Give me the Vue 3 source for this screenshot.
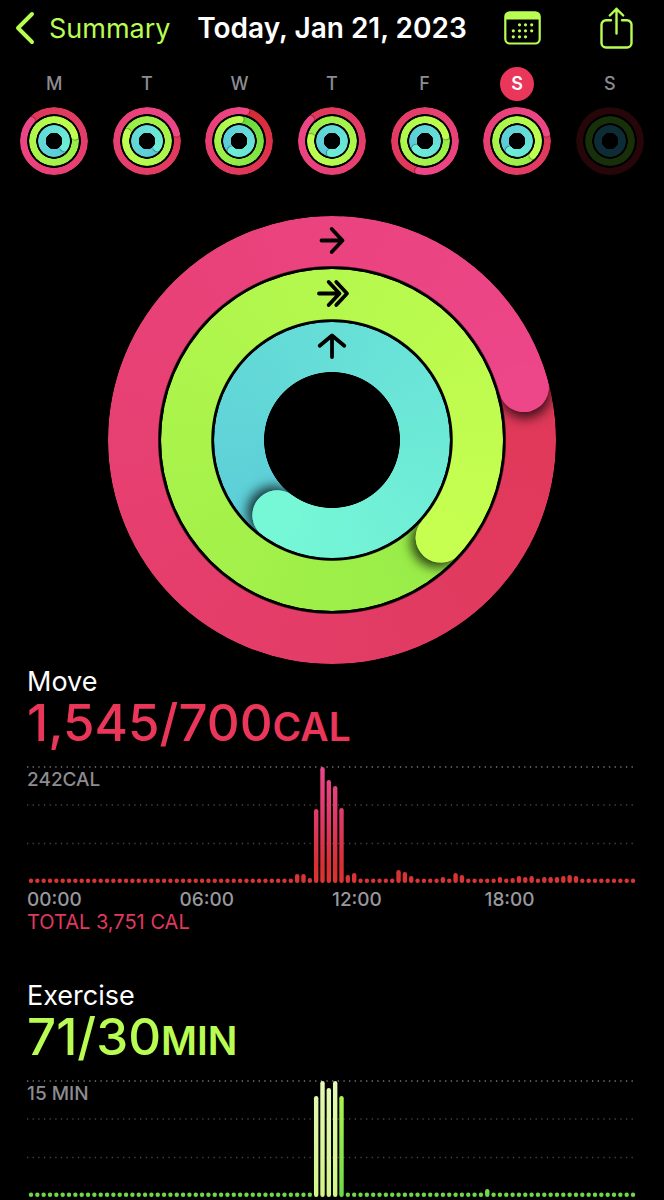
<script setup>
const palette = {
  move: ['#df3857', '#ed4689'],
  exercise: ['#98ec48', '#c6ff50'],
  stand: ['#5ccdd8', '#76f8d6'],
}
const smallPalette = {
  move: ['#df3857', '#ed4689'],
  exercise: ['#98ec48', '#c0ff50'],
  stand: ['#5ac8d8', '#6ceed6'],
}
const freshPalette = {
  move: ['#d62b35', '#ed4689'],
  exercise: ['#66d93c', '#bafc50'],
  stand: ['#5ac8d8', '#6ceed6'],
}
const kinds = ['move', 'exercise', 'stand']

function ringsFor(angles, colors = smallPalette) {
  return kinds.map((kind, i) => ({ kind, angle: angles[i], from: colors[kind][0], to: colors[kind][1] }))
}

function ringStyle(ring) {
  return { '--angle': ring.angle + 'deg', '--from': ring.from, '--to': ring.to }
}

const days = [
  { letter: 'M', name: 'Monday', rings: ringsFor([312, 77, 120]) },
  { letter: 'T', name: 'Tuesday', rings: ringsFor([75, 293, 120]) },
  { letter: 'W', name: 'Wednesday', rings: ringsFor([13, 3, 216], freshPalette) },
  { letter: 'T', name: 'Thursday', rings: ringsFor([315, 279, 184]) },
  { letter: 'F', name: 'Friday', rings: ringsFor([192, 76, 228]) },
  { letter: 'S', name: 'Saturday', selected: true, rings: ringsFor([75, 132, 216]) },
  { letter: 'S', name: 'Sunday', empty: true, rings: ringsFor([0, 0, 0]) },
]

const today = ringsFor([74.6, 132, 216], palette)

function quarterHours(values, base) {
  return Array.from({ length: 96 }, (_, i) => {
    const height = values[i] ?? base
    return { i, x: 4 + i * 6.337 - 2.2, y: 117 - height, height }
  })
}

const hours = ['00:00', '06:00', '12:00', '18:00']

const charts = [
  {
    id: 'move',
    title: 'Move',
    value: '1,545/700',
    unit: 'CAL',
    peak: '242CAL',
    total: 'TOTAL 3,751 CAL',
    bright: [],
    bars: quarterHours({
      42: 9, 43: 9, 44: 5, 45: 74, 46: 116, 47: 103, 48: 97, 49: 75, 50: 8, 51: 10,
      58: 13, 59: 11, 60: 7, 65: 6, 67: 10, 68: 8, 74: 6, 76: 5, 77: 7, 78: 6, 79: 7,
      81: 6, 82: 6, 83: 6, 84: 7, 85: 8, 86: 7,
    }, 4.4),
  },
  {
    id: 'exercise',
    title: 'Exercise',
    value: '71/30',
    unit: 'MIN',
    peak: '15 MIN',
    bright: [45, 46, 47, 48],
    bars: quarterHours({ 45: 101, 46: 116, 47: 109, 48: 116, 49: 101, 72: 8 }, 4.4),
  },
]
</script>

<template>
  <main class="page">
    <header class="bar">
      <button type="button" class="back">
        <svg width="20" height="34" viewBox="0 0 20 34" aria-hidden="true">
          <path d="M17 3 3 17 17 31" fill="none" stroke="currentColor" stroke-width="4" stroke-linecap="round" stroke-linejoin="round" />
        </svg>
        <span>Summary</span>
      </button>
      <h1 class="date">Today, Jan 21, 2023</h1>
      <div class="actions">
        <button type="button" class="icon" aria-label="Calendar">
          <svg width="37" height="34" viewBox="0 0 37 34" aria-hidden="true">
            <rect x="1.3" y="1.3" width="34.4" height="31.2" rx="4.5" fill="none" stroke="currentColor" stroke-width="2.2" />
            <path d="M1 8.5V5.5A4.5 4.5 0 0 1 5.500 1H31.500A4.500 4.500 0 0 1 36 5.500V8.500Z" fill="currentColor" />
            <g fill="currentColor">
              <circle cx="15.500" cy="13.800" r="1.600" /><circle cx="21.500" cy="13.800" r="1.600" /><circle cx="27.700" cy="13.800" r="1.600" />
              <circle cx="9.300" cy="19.800" r="1.600" /><circle cx="15.500" cy="19.800" r="1.600" /><circle cx="21.500" cy="19.800" r="1.600" /><circle cx="27.700" cy="19.800" r="1.600" />
              <circle cx="9.300" cy="25.800" r="1.600" /><circle cx="15.500" cy="25.800" r="1.600" /><circle cx="21.500" cy="25.800" r="1.600" />
            </g>
          </svg>
        </button>
        <button type="button" class="icon" aria-label="Share">
          <svg width="33" height="42" viewBox="0 0 33 42" aria-hidden="true">
            <g fill="none" stroke="currentColor" stroke-width="2.400" stroke-linecap="round" stroke-linejoin="round">
              <path d="M11 13.300H6A4.500 4.500 0 0 0 1.500 17.800V36A4.500 4.500 0 0 0 6 40.500H27A4.500 4.500 0 0 0 31.500 36V17.800A4.500 4.500 0 0 0 27 13.300H22" />
              <path d="M16.500 26.500V1.800M9.800 8.500 16.500 1.800 23.200 8.500" />
            </g>
          </svg>
        </button>
      </div>
    </header>

    <nav class="week" aria-label="Days of the week">
      <button v-for="day in days" :key="day.name" type="button" class="day" :class="{ selected: day.selected, empty: day.empty }" :aria-label="day.name">
        <span class="letter">{{ day.letter }}</span>
        <span class="rings small">
          <span v-for="ring in day.rings" :key="ring.kind" class="ring" :class="ring.kind" :style="ringStyle(ring)">
            <span class="turn"><span class="shade"></span></span>
            <span class="tail"></span>
            <span class="turn"><span class="cap"></span></span>
          </span>
        </span>
      </button>
    </nav>

    <div class="rings large" role="img" aria-label="Move, Exercise and Stand rings">
      <span v-for="ring in today" :key="ring.kind" class="ring" :class="ring.kind" :style="ringStyle(ring)">
        <span class="turn"><span class="shade"></span></span>
        <span class="tail"></span>
        <span class="turn"><span class="cap"></span></span>
      </span>
      <svg class="arrows" viewBox="0 0 448 448" aria-hidden="true">
        <g fill="none" stroke="#000" stroke-width="3.800" stroke-linecap="round" stroke-linejoin="round">
          <path d="M213.500 24.500H234.500M223.700 13 234.500 24.500 223.700 36" />
          <path d="M211 77.500H231.500M220.700 66 231.500 77.500 220.700 89M228.300 66 239 77.500 228.300 89" />
          <path d="M224 141V120M211.700 129.800 224 119.500 236.300 129.800" />
        </g>
      </svg>
    </div>

    <section v-for="chart in charts" :key="chart.id" class="metric" :class="chart.id">
      <h2 class="title">{{ chart.title }}</h2>
      <p class="value">{{ chart.value }}<span class="unit">{{ chart.unit }}</span></p>
      <div class="chart">
        <svg class="plot" viewBox="0 0 610 117" role="img" :aria-label="chart.title + ' by time of day'">
          <defs>
            <linearGradient id="move-fill" gradientUnits="userSpaceOnUse" x1="0" y1="0" x2="0" y2="117">
              <stop offset="0" stop-color="#ec4790" />
              <stop offset="0.500" stop-color="#dd385f" />
              <stop offset="0.850" stop-color="#d72f33" />
              <stop offset="1" stop-color="#d93632" />
            </linearGradient>
            <linearGradient id="exercise-fill" gradientUnits="userSpaceOnUse" x1="0" y1="0" x2="0" y2="117">
              <stop offset="0" stop-color="#b8f94e" />
              <stop offset="1" stop-color="#6cd748" />
            </linearGradient>
            <linearGradient id="bright-fill" gradientUnits="userSpaceOnUse" x1="0" y1="0" x2="0" y2="117">
              <stop offset="0" stop-color="#e5f9b5" />
              <stop offset="1" stop-color="#d2f588" />
            </linearGradient>
          </defs>
          <g class="grid" stroke-dasharray="1.300 4.350">
            <line x1="0" x2="610" y1="1" y2="1" class="strong" />
            <line x1="0" x2="610" y1="39" y2="39" />
            <line x1="0" x2="610" y1="77.500" y2="77.500" />
          </g>
          <rect
            v-for="bar in chart.bars"
            :key="bar.i"
            :x="bar.x"
            :y="bar.y"
            width="4.400"
            :height="bar.height"
            rx="2.200"
            :fill="chart.bright.includes(bar.i) ? 'url(#bright-fill)' : `url(#${chart.id}-fill)`"
          />
        </svg>
        <span class="peak">{{ chart.peak }}</span>
      </div>
      <template v-if="chart.total">
        <div class="hours">
          <span v-for="hour in hours" :key="hour">{{ hour }}</span>
        </div>
        <p class="total">{{ chart.total }}</p>
      </template>
    </section>
  </main>
</template>

<style>
body {
  background: #000;
}
</style>

<style scoped>
.page {
  min-height: 100vh;
  box-sizing: border-box;
  background: #000;
  color: #fff;
  font-family: Inter, "Liberation Sans", sans-serif;
}

button {
  padding: 0;
  border: 0;
  background: none;
  color: inherit;
  font: inherit;
  cursor: pointer;
}

h1,
h2,
p {
  margin: 0;
}

.bar {
  display: grid;
  grid-template-columns: 1fr auto 1fr;
  align-items: center;
  height: 56px;
  padding: 0 15px;
  color: #b9fc52;
}

.back {
  display: flex;
  align-items: center;
  gap: 14px;
  font-size: 27px;
}

.date {
  color: #fff;
  font-size: 28px;
  font-weight: 600;
  white-space: nowrap;
}

.actions {
  display: flex;
  justify-content: flex-end;
  align-items: center;
  gap: 59px;
  padding-right: 16px;
}

.icon {
  display: flex;
}

.week {
  display: grid;
  grid-template-columns: repeat(7, 1fr);
  padding: 11px 8px 0;
}

.day {
  display: flex;
  flex-direction: column;
  align-items: center;
  gap: 6px;
  color: #8c8c91;
}

.letter {
  width: 34px;
  border-radius: 50%;
  font-size: 18px;
  font-weight: 500;
  line-height: 34px;
}

.selected .letter {
  background: #e9365a;
  color: #fff;
  font-weight: 600;
}

.rings {
  position: relative;
  display: block;
  aspect-ratio: 1;
}

.small {
  width: 68px;
}

.large {
  width: 448px;
  max-width: 90%;
  margin: 41px auto 0;
}

.ring {
  --hole: 77.6%;
  position: absolute;
  inset: 0;
  overflow: hidden;
  border-radius: 50%;
  background: conic-gradient(from var(--angle), var(--from), var(--to));
  mask: radial-gradient(closest-side, transparent calc(var(--hole) - 0.300%), #000 calc(var(--hole) + 0.300%));
}

.ring.exercise {
  --hole: 70.600%;
  inset: 11.830%;
}

.ring.stand {
  --hole: 57.600%;
  inset: 23.660%;
}

.small .ring {
  --hole: 79%;
  mask: radial-gradient(closest-side, transparent calc(var(--hole) - 1%), #000 calc(var(--hole) + 1%));
}

.small .ring.exercise {
  --hole: 71%;
  inset: 13.240%;
}

.small .ring.stand {
  --hole: 52%;
  inset: 26.470%;
}

.turn {
  position: absolute;
  inset: 0;
  transform: rotate(var(--angle));
}

.cap,
.shade {
  position: absolute;
  top: 0;
  left: 50%;
  width: calc((100% - var(--hole)) / 2);
  aspect-ratio: 1;
  border-radius: 50%;
  transform: translateX(-50%);
}

.cap {
  background: var(--to);
}

.shade {
  box-shadow: 5px 0 12px 1px rgba(0, 0, 0, 0.750);
}

.small .shade {
  box-shadow: 1px 0 1px rgba(0, 0, 0, 0.350);
}

.tail {
  position: absolute;
  inset: 0;
  background: conic-gradient(from var(--angle), transparent 80%, color-mix(in srgb, var(--from) 20%, var(--to)) 80%, var(--to));
}

.empty .ring {
  background: #260609;
}

.empty .ring.exercise {
  background: #17300a;
}

.empty .ring.stand {
  background: #0d2c36;
}

.empty .turn,
.empty .tail {
  display: none;
}

.arrows {
  position: absolute;
  inset: 0;
}

.metric {
  padding: 4px 27px 0;
}

.metric + .metric {
  padding-top: 48px;
}

.title {
  font-size: 27px;
  font-weight: 400;
  line-height: 28px;
}

.value {
  font-size: 51px;
  font-weight: 500;
  line-height: 54px;
}

.unit {
  font-size: 39px;
  font-weight: 600;
  line-height: 1;
}

.move .value {
  color: #ea3659;
}

.exercise .value {
  color: #b9fc52;
}

.chart {
  position: relative;
  margin-top: 16px;
}

.plot {
  display: block;
  width: 100%;
}

.grid {
  stroke: #444;
  stroke-width: 1.300;
}

.strong {
  stroke: #777;
}

.peak {
  position: absolute;
  top: 3px;
  left: 0;
  color: #8c8c91;
  font-size: 19px;
  font-weight: 500;
  line-height: 22px;
}

.hours {
  display: grid;
  grid-template-columns: repeat(4, 1fr);
  margin-top: 7px;
  color: #98989d;
  font-size: 19px;
  font-weight: 500;
  line-height: 20px;
}

.total {
  color: #e0395f;
  font-size: 20px;
  line-height: 24px;
}
</style>
